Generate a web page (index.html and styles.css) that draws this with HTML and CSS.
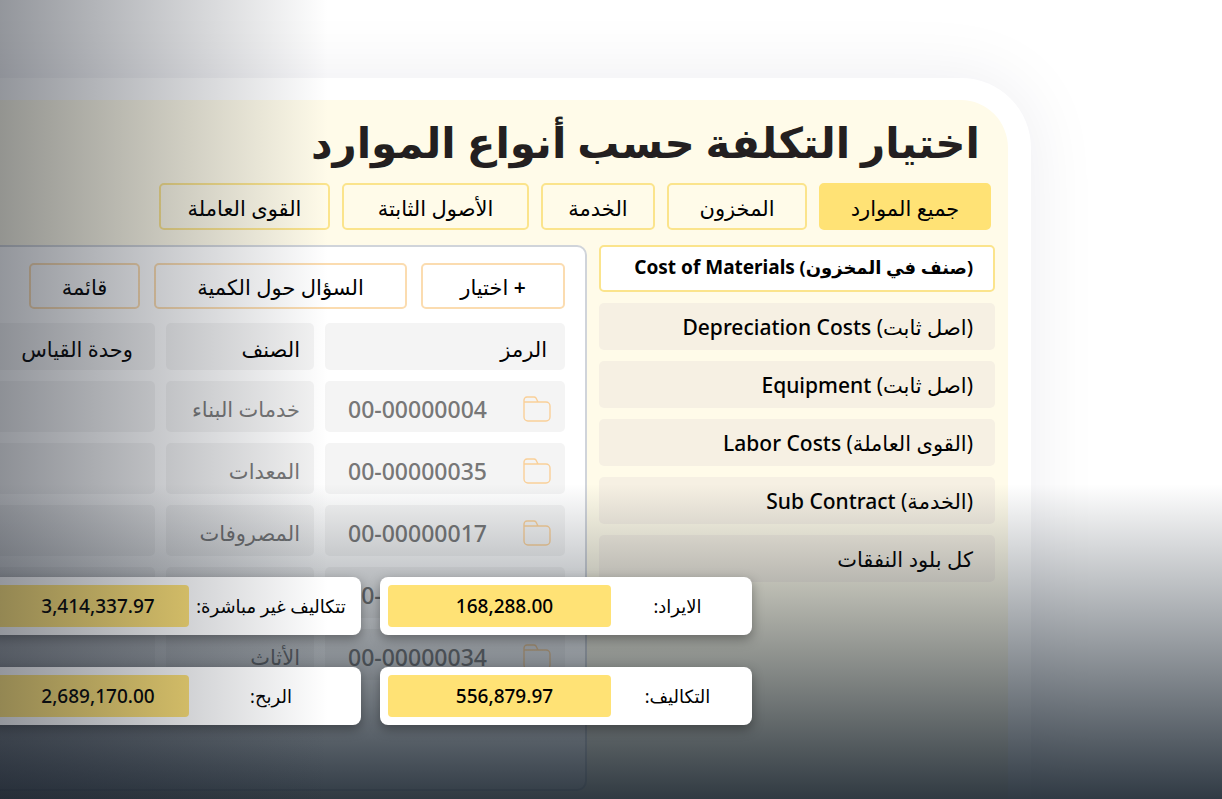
FILE: index.html
```
<!DOCTYPE html>
<html lang="ar" dir="rtl">
<head>
    <meta charset="UTF-8">
    <title>اختيار التكلفة حسب أنواع الموارد</title>
    <link rel="stylesheet" href="styles.css">
</head>
<body>
    <svg class="sprite" aria-hidden="true">
        <symbol id="folder" viewBox="0 0 28 26">
            <path d="M1 6V4a3 3 0 0 1 3-3h7a3 3 0 0 1 2 1l2 4M1 6h22a4 4 0 0 1 4 4v11a4 4 0 0 1-4 4H5a4 4 0 0 1-4-4Z" fill="none" stroke="currentColor" stroke-width="1.4" stroke-linejoin="round"/>
        </symbol>
    </svg>

    <main class="card">
        <h1>اختيار التكلفة حسب أنواع الموارد</h1>

        <div class="tabs">
            <button class="tab active">جميع الموارد</button>
            <button class="tab">المخزون</button>
            <button class="tab">الخدمة</button>
            <button class="tab">الأصول الثابتة</button>
            <button class="tab">القوى العاملة</button>
        </div>

        <div class="content">
            <div class="cost-list">
                <button class="cost selected">(صنف في المخزون) <span>Cost of Materials</span></button>
                <button class="cost">(اصل ثابت) <span>Depreciation Costs</span></button>
                <button class="cost">(اصل ثابت) <span>Equipment</span></button>
                <button class="cost">(القوى العاملة) <span>Labor Costs</span></button>
                <button class="cost">(الخدمة) <span>Sub Contract</span></button>
                <button class="cost">كل بلود النفقات</button>
            </div>

            <section class="panel">
                <div class="toolbar">
                    <button class="tool"><b>+</b> اختيار</button>
                    <button class="tool">السؤال حول الكمية</button>
                    <button class="tool">قائمة</button>
                </div>

                <table>
                    <thead>
                        <tr>
                            <th class="code-col">الرمز</th>
                            <th class="item-col">الصنف</th>
                            <th class="unit-col">وحدة القياس</th>
                        </tr>
                    </thead>
                    <tbody>
                        <tr>
                            <td><div class="code"><svg><use href="#folder"/></svg><span dir="ltr">00-00000004</span></div></td>
                            <td>خدمات البناء</td>
                            <td></td>
                        </tr>
                        <tr>
                            <td><div class="code"><svg><use href="#folder"/></svg><span dir="ltr">00-00000035</span></div></td>
                            <td>المعدات</td>
                            <td></td>
                        </tr>
                        <tr>
                            <td><div class="code"><svg><use href="#folder"/></svg><span dir="ltr">00-00000017</span></div></td>
                            <td>المصروفات</td>
                            <td></td>
                        </tr>
                        <tr>
                            <td><div class="code"><svg><use href="#folder"/></svg><span dir="ltr">00-00000021</span></div></td>
                            <td></td>
                            <td></td>
                        </tr>
                        <tr>
                            <td><div class="code"><svg><use href="#folder"/></svg><span dir="ltr">00-00000034</span></div></td>
                            <td>الأثاث</td>
                            <td></td>
                        </tr>
                    </tbody>
                </table>
            </section>
        </div>
    </main>

    <div class="fade-bottom"></div>

    <div class="totals">
        <div class="total">
            <span class="label">الايراد:</span>
            <span class="value">168,288.00</span>
        </div>
        <div class="total wide-label">
            <span class="label">تتكاليف غير مباشرة:</span>
            <span class="value">3,414,337.97</span>
        </div>
        <div class="total">
            <span class="label">التكاليف:</span>
            <span class="value">556,879.97</span>
        </div>
        <div class="total wide-label">
            <span class="label">الربح:</span>
            <span class="value">2,689,170.00</span>
        </div>
    </div>

    <div class="fade-left"></div>
</body>
</html>
```
FILE: styles.css
```
* {
    box-sizing: border-box;
}
body {
    font-family: "Noto Sans", "DejaVu Sans", sans-serif;
    font-size: 21px;
    margin: 0;
    height: 100vh;
    display: flex;
    flex-direction: column;
    position: relative;
    overflow: hidden;
    background: #fff;
    color: #000;
}
button {
    font: inherit;
    color: inherit;
    cursor: pointer;
}
.sprite {
    display: none;
}
.card {
    flex: 1;
    display: flex;
    flex-direction: column;
    margin: 78px 191px 0 -74px;
    padding: 0 13px 8px 0;
    background: #fffbe9;
    border: 22px solid #fff;
    border-right-width: 23px;
    border-bottom: none;
    border-radius: 0 70px 0 0;
    box-shadow: 0 0 70px rgba(30, 30, 60, 0.08);
}
h1 {
    margin: 12px 15px 11px 0;
    font-size: 42px;
    line-height: 60px;
    font-weight: bold;
    color: #231f20;
    white-space: nowrap;
}
.tabs {
    display: grid;
    grid-template-columns: 172px 140px 114px 187px 171px;
    gap: 12px;
    margin: 0 4px 15px 0;
}
.tab {
    height: 47px;
    padding: 2px 0 0;
    background: transparent;
    border: 2px solid #fbe48c;
    border-radius: 5px;
    white-space: nowrap;
}
.tab.active {
    background: #ffe275;
    border-color: #ffe275;
}
.content {
    flex: 1;
    display: flex;
    gap: 12px;
}
.cost-list {
    flex: none;
    width: 396px;
    display: flex;
    flex-direction: column;
    gap: 11px;
}
.cost {
    height: 47px;
    padding: 0 22px;
    text-align: right;
    background: #f6f0e3;
    border: none;
    border-radius: 5px;
    white-space: nowrap;
}
.cost span {
    font-weight: 500;
}
.cost.selected {
    background: #fff;
    border: 2px solid #fbe48c;
    padding: 0 20px 4px;
    font-size: 18px;
    font-weight: bold;
}
.cost.selected span {
    font-size: 19px;
    font-weight: bold;
}
.panel {
    flex: 1;
    padding: 16px 20px;
    background: #fff;
    border: 2px solid #d0d4da;
    border-radius: 10px;
}
.toolbar {
    display: grid;
    grid-template-columns: 144px 253px 111px;
    gap: 14px;
}
.tool {
    height: 46px;
    padding: 2px 0 0;
    background: transparent;
    border: 2px solid #fbdcb0;
    border-radius: 5px;
    white-space: nowrap;
}
.tool b {
    font-weight: 600;
}
table {
    width: 100%;
    margin: 3px -11px 0 0;
    border-spacing: 11px;
    table-layout: fixed;
}
.code-col {
    width: 240px;
}
.item-col {
    width: 148px;
}
th, td {
    padding: 4px 14px 0;
    background: #f4f4f4;
    border-radius: 5px;
    text-align: right;
    white-space: nowrap;
}
th {
    height: 47px;
    font-weight: normal;
}
th.code-col {
    padding-right: 18px;
}
th.unit-col {
    padding-right: 22px;
}
td {
    height: 51px;
    color: #777;
}
.code {
    display: flex;
    align-items: center;
    justify-content: space-between;
    padding-left: 9px;
    font-size: 23px;
    font-weight: 500;
}
.code svg {
    width: 28px;
    height: 26px;
    color: #f9cf98;
}
.totals {
    position: absolute;
    right: 470px;
    bottom: 74px;
    display: grid;
    grid-template-columns: 372px 372px;
    gap: 32px 19px;
}
.total {
    display: flex;
    align-items: center;
    height: 58px;
    padding: 8px;
    background: #fff;
    border-radius: 8px;
    box-shadow: 0 4px 12px rgba(0, 0, 0, 0.35);
    font-size: 18px;
    white-space: nowrap;
}
.label {
    flex: 1;
    text-align: center;
}
.value {
    width: 223px;
    line-height: 42px;
    padding-left: 10px;
    font-size: 19px;
    text-align: center;
    font-weight: 500;
    background: #ffe275;
    border-radius: 4px;
}
.wide-label .value {
    width: 192px;
}
.fade-bottom, .fade-left {
    position: absolute;
    left: 0;
    bottom: 0;
    pointer-events: none;
}
.fade-bottom {
    width: 100%;
    height: 315px;
    background: linear-gradient(to top, rgba(26, 37, 48, 0.9), rgba(26, 37, 48, 0));
}
.fade-left {
    width: 328px;
    height: 100%;
    background: linear-gradient(to right, rgba(26, 32, 44, 0.47), rgba(26, 32, 44, 0));
}
```
